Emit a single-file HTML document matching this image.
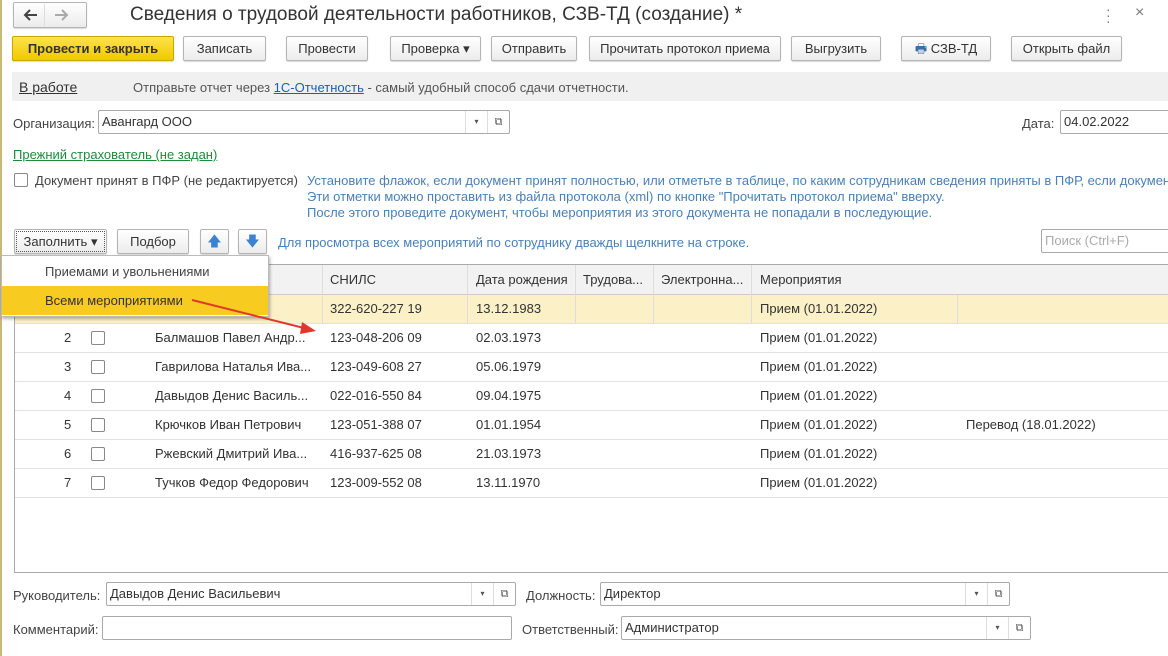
<!DOCTYPE html>
<html><head><meta charset="utf-8"><style>
*{box-sizing:border-box;margin:0;padding:0}
body{width:1168px;height:656px;overflow:hidden;background:#fff;font-family:"Liberation Sans",Arial,sans-serif;font-size:13px;color:#333;position:relative}
.a{position:absolute;white-space:nowrap}
.btn{position:absolute;height:25px;border:1px solid #b4b4b4;border-radius:2px;background:linear-gradient(#fff,#ececec);box-shadow:0 1px 1px rgba(0,0,0,.15);text-align:center;line-height:23px;color:#333}
.inp{position:absolute;height:24px;border:1px solid #aaa;border-radius:2px;background:#fff;line-height:22px;padding-left:3px}
.dd{position:absolute;top:0;bottom:0;border-left:1px solid #ddd;width:22px;text-align:center;font-size:8px;color:#555}
.lnk{text-decoration:underline}
.blue{color:#4a80b8}
.row{position:absolute;left:15px;right:0;height:29px;border-bottom:1px solid #e2e2e2;line-height:28px}
.cb{position:absolute;width:14px;height:14px;border:1px solid #888;border-radius:2px;background:#fff}
</style></head><body>
<div class="a" style="left:0;top:0;width:2px;height:656px;background:#c9b77a"></div>
<!-- nav -->
<div class="btn" style="left:13px;top:2px;width:74px;height:26px"></div>
<div class="a" style="left:44px;top:4px;height:22px;border-left:1px solid #ddd"></div>
<svg class="a" style="left:22px;top:8px" width="16" height="14"><path d="M15 7H3M8 2L3 7l5 5" stroke="#444" stroke-width="2" fill="none"/></svg>
<svg class="a" style="left:54px;top:8px" width="16" height="14"><path d="M1 7h12M8 2l5 5-5 5" stroke="#aaa" stroke-width="2" fill="none"/></svg>
<div class="a" style="left:130px;top:4px;font-size:19px;color:#333">Сведения о трудовой деятельности работников, СЗВ-ТД (создание) *</div>
<div class="a" style="left:1106px;top:6px;font-size:14px;color:#777;line-height:6px">·<br>·<br>·</div>
<div class="a" style="left:1135px;top:4px;font-size:16px;color:#777">×</div>
<!-- toolbar -->
<div class="btn" style="left:12px;top:36px;width:162px;background:linear-gradient(#fde34a,#f2c800);border-color:#c9a800;font-weight:bold;color:#333">Провести и закрыть</div>
<div class="btn" style="left:183px;top:36px;width:83px">Записать</div>
<div class="btn" style="left:286px;top:36px;width:82px">Провести</div>
<div class="btn" style="left:390px;top:36px;width:91px">Проверка ▾</div>
<div class="btn" style="left:491px;top:36px;width:86px">Отправить</div>
<div class="btn" style="left:589px;top:36px;width:192px">Прочитать протокол приема</div>
<div class="btn" style="left:791px;top:36px;width:90px">Выгрузить</div>
<div class="btn" style="left:901px;top:36px;width:90px"><span style="color:#3a6ea5">🖶</span> СЗВ-ТД</div>
<div class="btn" style="left:1011px;top:36px;width:111px">Открыть файл</div>
<!-- status bar -->
<div class="a" style="left:12px;top:72px;width:1156px;height:29px;background:#f0f0f0"></div>
<div class="a lnk" style="left:19px;top:79px;font-size:14px;color:#333">В работе</div>
<div class="a" style="left:133px;top:80px;color:#555">Отправьте отчет через <span class="lnk" style="color:#1a5fb4">1С-Отчетность</span> - самый удобный способ сдачи отчетности.</div>
<!-- org -->
<div class="a" style="left:13px;top:116px;color:#444">Организация:</div>
<div class="inp" style="left:98px;top:110px;width:412px">Авангард ООО<div class="dd" style="right:22px;line-height:22px">▾</div><div class="dd" style="right:0;line-height:22px;font-size:11px">⧉</div></div>
<div class="a" style="left:1022px;top:116px;color:#444">Дата:</div>
<div class="inp" style="left:1060px;top:110px;width:120px">04.02.2022</div>
<div class="a lnk" style="left:13px;top:147px;color:#1e8a3c">Прежний страхователь (не задан)</div>
<div class="cb" style="left:14px;top:173px"></div>
<div class="a" style="left:35px;top:173px;color:#444">Документ принят в ПФР (не редактируется)</div>
<div class="a blue" style="left:307px;top:173px;line-height:16px">Установите флажок, если документ принят полностью, или отметьте в таблице, по каким сотрудникам сведения приняты в ПФР, если документ<br>Эти отметки можно проставить из файла протокола (xml) по кнопке "Прочитать протокол приема" вверху.<br>После этого проведите документ, чтобы мероприятия из этого документа не попадали в последующие.</div>
<!-- table toolbar -->
<div class="btn" style="left:14px;top:229px;width:93px;outline:1px dotted #555;outline-offset:-3px">Заполнить ▾</div>
<div class="btn" style="left:117px;top:229px;width:72px">Подбор</div>
<div class="btn" style="left:200px;top:229px;width:29px;color:#3b83d0;font-size:14px">🡅</div>
<div class="btn" style="left:238px;top:229px;width:29px;color:#3b83d0;font-size:14px">🡇</div>
<div class="a blue" style="left:278px;top:235px">Для просмотра всех мероприятий по сотруднику дважды щелкните на строке.</div>
<div class="inp" style="left:1041px;top:229px;width:140px;color:#aaa">Поиск (Ctrl+F)</div>
<!-- table -->
<div class="a" style="left:14px;top:264px;width:1160px;height:309px;border:1px solid #aaa"></div>
<div class="a" style="left:15px;top:265px;width:1153px;height:30px;background:#f2f2f2;border-bottom:1px solid #ccc;line-height:29px">
<span class="a" style="left:315px">СНИЛС</span><span class="a" style="left:461px">Дата рождения</span><span class="a" style="left:568px">Трудова...</span><span class="a" style="left:646px">Электронна...</span><span class="a" style="left:745px">Мероприятия</span>
</div>
<div class="row" style="top:295px;background:#fbf0c6"><span class="a" style="left:315px">322-620-227 19</span><span class="a" style="left:461px">13.12.1983</span><span class="a" style="left:745px">Прием (01.01.2022)</span><span class="a" style="left:129px">Агафонов Алексан...</span></div>
<div class="row" style="top:324px"><span class="a" style="left:49px">2</span><span class="cb" style="left:76px;top:7px"></span><span class="a" style="left:140px">Балмашов Павел Андр...</span><span class="a" style="left:315px">123-048-206 09</span><span class="a" style="left:461px">02.03.1973</span><span class="a" style="left:745px">Прием (01.01.2022)</span></div>
<div class="row" style="top:353px"><span class="a" style="left:49px">3</span><span class="cb" style="left:76px;top:7px"></span><span class="a" style="left:140px">Гаврилова Наталья Ива...</span><span class="a" style="left:315px">123-049-608 27</span><span class="a" style="left:461px">05.06.1979</span><span class="a" style="left:745px">Прием (01.01.2022)</span></div>
<div class="row" style="top:382px"><span class="a" style="left:49px">4</span><span class="cb" style="left:76px;top:7px"></span><span class="a" style="left:140px">Давыдов Денис Василь...</span><span class="a" style="left:315px">022-016-550 84</span><span class="a" style="left:461px">09.04.1975</span><span class="a" style="left:745px">Прием (01.01.2022)</span></div>
<div class="row" style="top:411px"><span class="a" style="left:49px">5</span><span class="cb" style="left:76px;top:7px"></span><span class="a" style="left:140px">Крючков Иван Петрович</span><span class="a" style="left:315px">123-051-388 07</span><span class="a" style="left:461px">01.01.1954</span><span class="a" style="left:745px">Прием (01.01.2022)</span><span class="a" style="left:951px">Перевод (18.01.2022)</span></div>
<div class="row" style="top:440px"><span class="a" style="left:49px">6</span><span class="cb" style="left:76px;top:7px"></span><span class="a" style="left:140px">Ржевский Дмитрий Ива...</span><span class="a" style="left:315px">416-937-625 08</span><span class="a" style="left:461px">21.03.1973</span><span class="a" style="left:745px">Прием (01.01.2022)</span></div>
<div class="row" style="top:469px"><span class="a" style="left:49px">7</span><span class="cb" style="left:76px;top:7px"></span><span class="a" style="left:140px">Тучков Федор Федорович</span><span class="a" style="left:315px">123-009-552 08</span><span class="a" style="left:461px">13.11.1970</span><span class="a" style="left:745px">Прием (01.01.2022)</span></div>
<div class="a" style="left:322px;top:265px;height:59px;border-left:1px solid #ddd"></div>
<div class="a" style="left:467px;top:265px;height:59px;border-left:1px solid #ddd"></div>
<div class="a" style="left:575px;top:265px;height:59px;border-left:1px solid #ddd"></div>
<div class="a" style="left:653px;top:265px;height:59px;border-left:1px solid #ddd"></div>
<div class="a" style="left:751px;top:265px;height:59px;border-left:1px solid #ddd"></div>
<div class="a" style="left:957px;top:295px;height:29px;border-left:1px solid #ddd"></div>
<!-- popup -->
<div class="a" style="left:1px;top:255px;width:268px;height:62px;background:#fff;border:1px solid #bbb;box-shadow:1px 2px 3px rgba(0,0,0,.3)"></div>
<div class="a" style="left:45px;top:264px;color:#444">Приемами и увольнениями</div>
<div class="a" style="left:2px;top:286px;width:266px;height:29px;background:#f8cb20"></div>
<div class="a" style="left:45px;top:293px;color:#333">Всеми мероприятиями</div>
<svg class="a" style="left:190px;top:296px" width="130" height="40"><line x1="2" y1="4" x2="118" y2="33" stroke="#e0382a" stroke-width="2"/><polygon points="126,35 112,26 110,38" fill="#e0382a"/></svg>
<!-- bottom -->
<div class="a" style="left:13px;top:588px;color:#444">Руководитель:</div>
<div class="inp" style="left:106px;top:582px;width:410px">Давыдов Денис Васильевич<div class="dd" style="right:22px;line-height:22px">▾</div><div class="dd" style="right:0;line-height:22px;font-size:11px">⧉</div></div>
<div class="a" style="left:526px;top:588px;color:#444">Должность:</div>
<div class="inp" style="left:600px;top:582px;width:410px">Директор<div class="dd" style="right:22px;line-height:22px">▾</div><div class="dd" style="right:0;line-height:22px;font-size:11px">⧉</div></div>
<div class="a" style="left:13px;top:622px;color:#444">Комментарий:</div>
<div class="inp" style="left:102px;top:616px;width:410px"></div>
<div class="a" style="left:522px;top:622px;color:#444">Ответственный:</div>
<div class="inp" style="left:621px;top:616px;width:410px">Администратор<div class="dd" style="right:22px;line-height:22px">▾</div><div class="dd" style="right:0;line-height:22px;font-size:11px">⧉</div></div>
</body></html>
